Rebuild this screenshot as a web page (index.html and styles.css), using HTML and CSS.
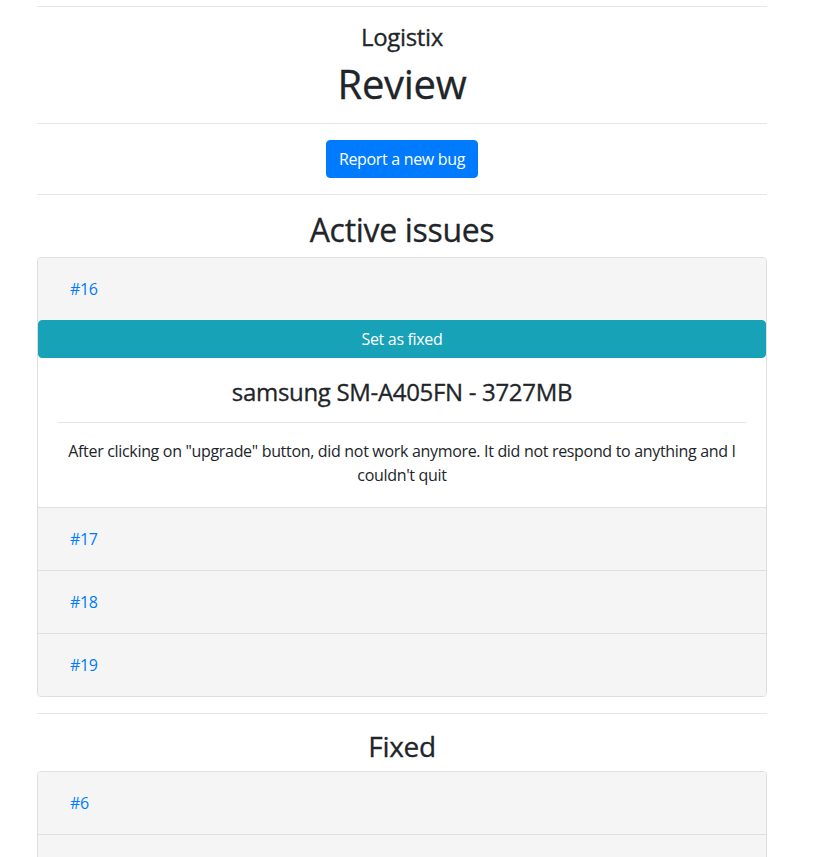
FILE: index.html
```html
<!DOCTYPE html>
<html lang="en">
<head>
<meta charset="utf-8">
<title>Logistix Review</title>
<link rel="stylesheet" href="styles.css">
</head>
<body>
<div class="container">
  <hr class="rule rule-top">
  <h4 class="app-name">Logistix</h4>
  <h1 class="page-title">Review</h1>
  <hr class="rule">
  <div class="center"><button class="btn btn-primary">Report a new bug</button></div>
  <hr class="rule">

  <h2 class="section-title">Active issues</h2>
  <div class="card">
    <div class="item">
      <div class="item-head"><a class="btn-link" href="#">#16</a></div>
      <div class="item-body">
        <button class="btn btn-info btn-block">Set as fixed</button>
        <div class="detail">
          <h4 class="detail-title">samsung SM-A405FN - 3727MB</h4>
          <hr class="rule detail-rule">
          <p class="detail-text">After clicking on "upgrade" button, did not work anymore. It did not respond to anything and I couldn't quit</p>
        </div>
      </div>
    </div>
    <div class="item"><div class="item-head"><a class="btn-link" href="#">#17</a></div></div>
    <div class="item"><div class="item-head"><a class="btn-link" href="#">#18</a></div></div>
    <div class="item"><div class="item-head"><a class="btn-link" href="#">#19</a></div></div>
  </div>

  <hr class="rule rule-section">
  <h3 class="section-title small">Fixed</h3>
  <div class="card">
    <div class="item"><div class="item-head"><a class="btn-link" href="#">#6</a></div></div>
    <div class="item"><div class="item-head"><a class="btn-link" href="#">#7</a></div></div>
  </div>
</div>
</body>
</html>
```

FILE: styles.css
```css
* { box-sizing: border-box; }
html, body { margin: 0; padding: 0; background: #fff; }
body {
  font-family: "Open Sans", "Noto Sans", sans-serif;
  font-size: 16px;
  line-height: 1.5;
  color: #212529;
  letter-spacing: -0.02em;
}
.container {
  width: 730px;
  margin-left: 37px;
  padding-top: 6px;
}
.rule {
  border: 0;
  border-top: 1px solid #e6e6e6;
  margin: 16px 0;
  height: 0;
}
.rule-top { margin-top: 0; }
h1, h2, h3, h4 {
  font-weight: 500;
  -webkit-text-stroke: 0.3px currentColor;
}
.app-name {
  margin: 0 0 8px;
  font-size: 24px;
  line-height: 1.2;
  text-align: center;
}
.page-title {
  margin: 0;
  font-size: 40px;
  line-height: 1.2;
  text-align: center;
}
.page-title + .rule { margin-top: 15px; }
.center { text-align: center; }
.btn {
  display: inline-block;
  font-family: inherit;
  font-size: 16px;
  line-height: 1.5;
  padding: 6px 12px;
  border: 1px solid transparent;
  border-radius: 4px;
  color: #fff;
  letter-spacing: inherit;
  cursor: pointer;
}
.btn-primary { background: #007bff; border-color: #007bff; }
.btn-info { background: #17a2b8; border-color: #17a2b8; }
.btn-block { display: block; width: 100%; }
.section-title {
  margin: 0 0 8px;
  font-size: 32px;
  line-height: 1.2;
  text-align: center;
}
.section-title.small { font-size: 28px; margin-bottom: 7px; }
.card {
  border: 1px solid #dfdfdf;
  border-radius: 4px;
  overflow: hidden;
}
.item + .item { border-top: 1px solid #dfdfdf; }
.item-head {
  background: #f5f5f5;
  padding: 12px 20px;
}
.btn-link {
  display: inline-block;
  padding: 6px 12px 6px 11px;
  border: 1px solid transparent;
  color: #007bff;
  text-decoration: none;
  line-height: 1.5;
}
.item-body { background: #fff; }
.detail { padding: 20px; text-align: center; }
.detail-title {
  margin: 0;
  font-size: 24px;
  line-height: 1.2;
}
.detail-rule { margin: 15px 0 16px; }
.detail-text { margin: 0; }
```
